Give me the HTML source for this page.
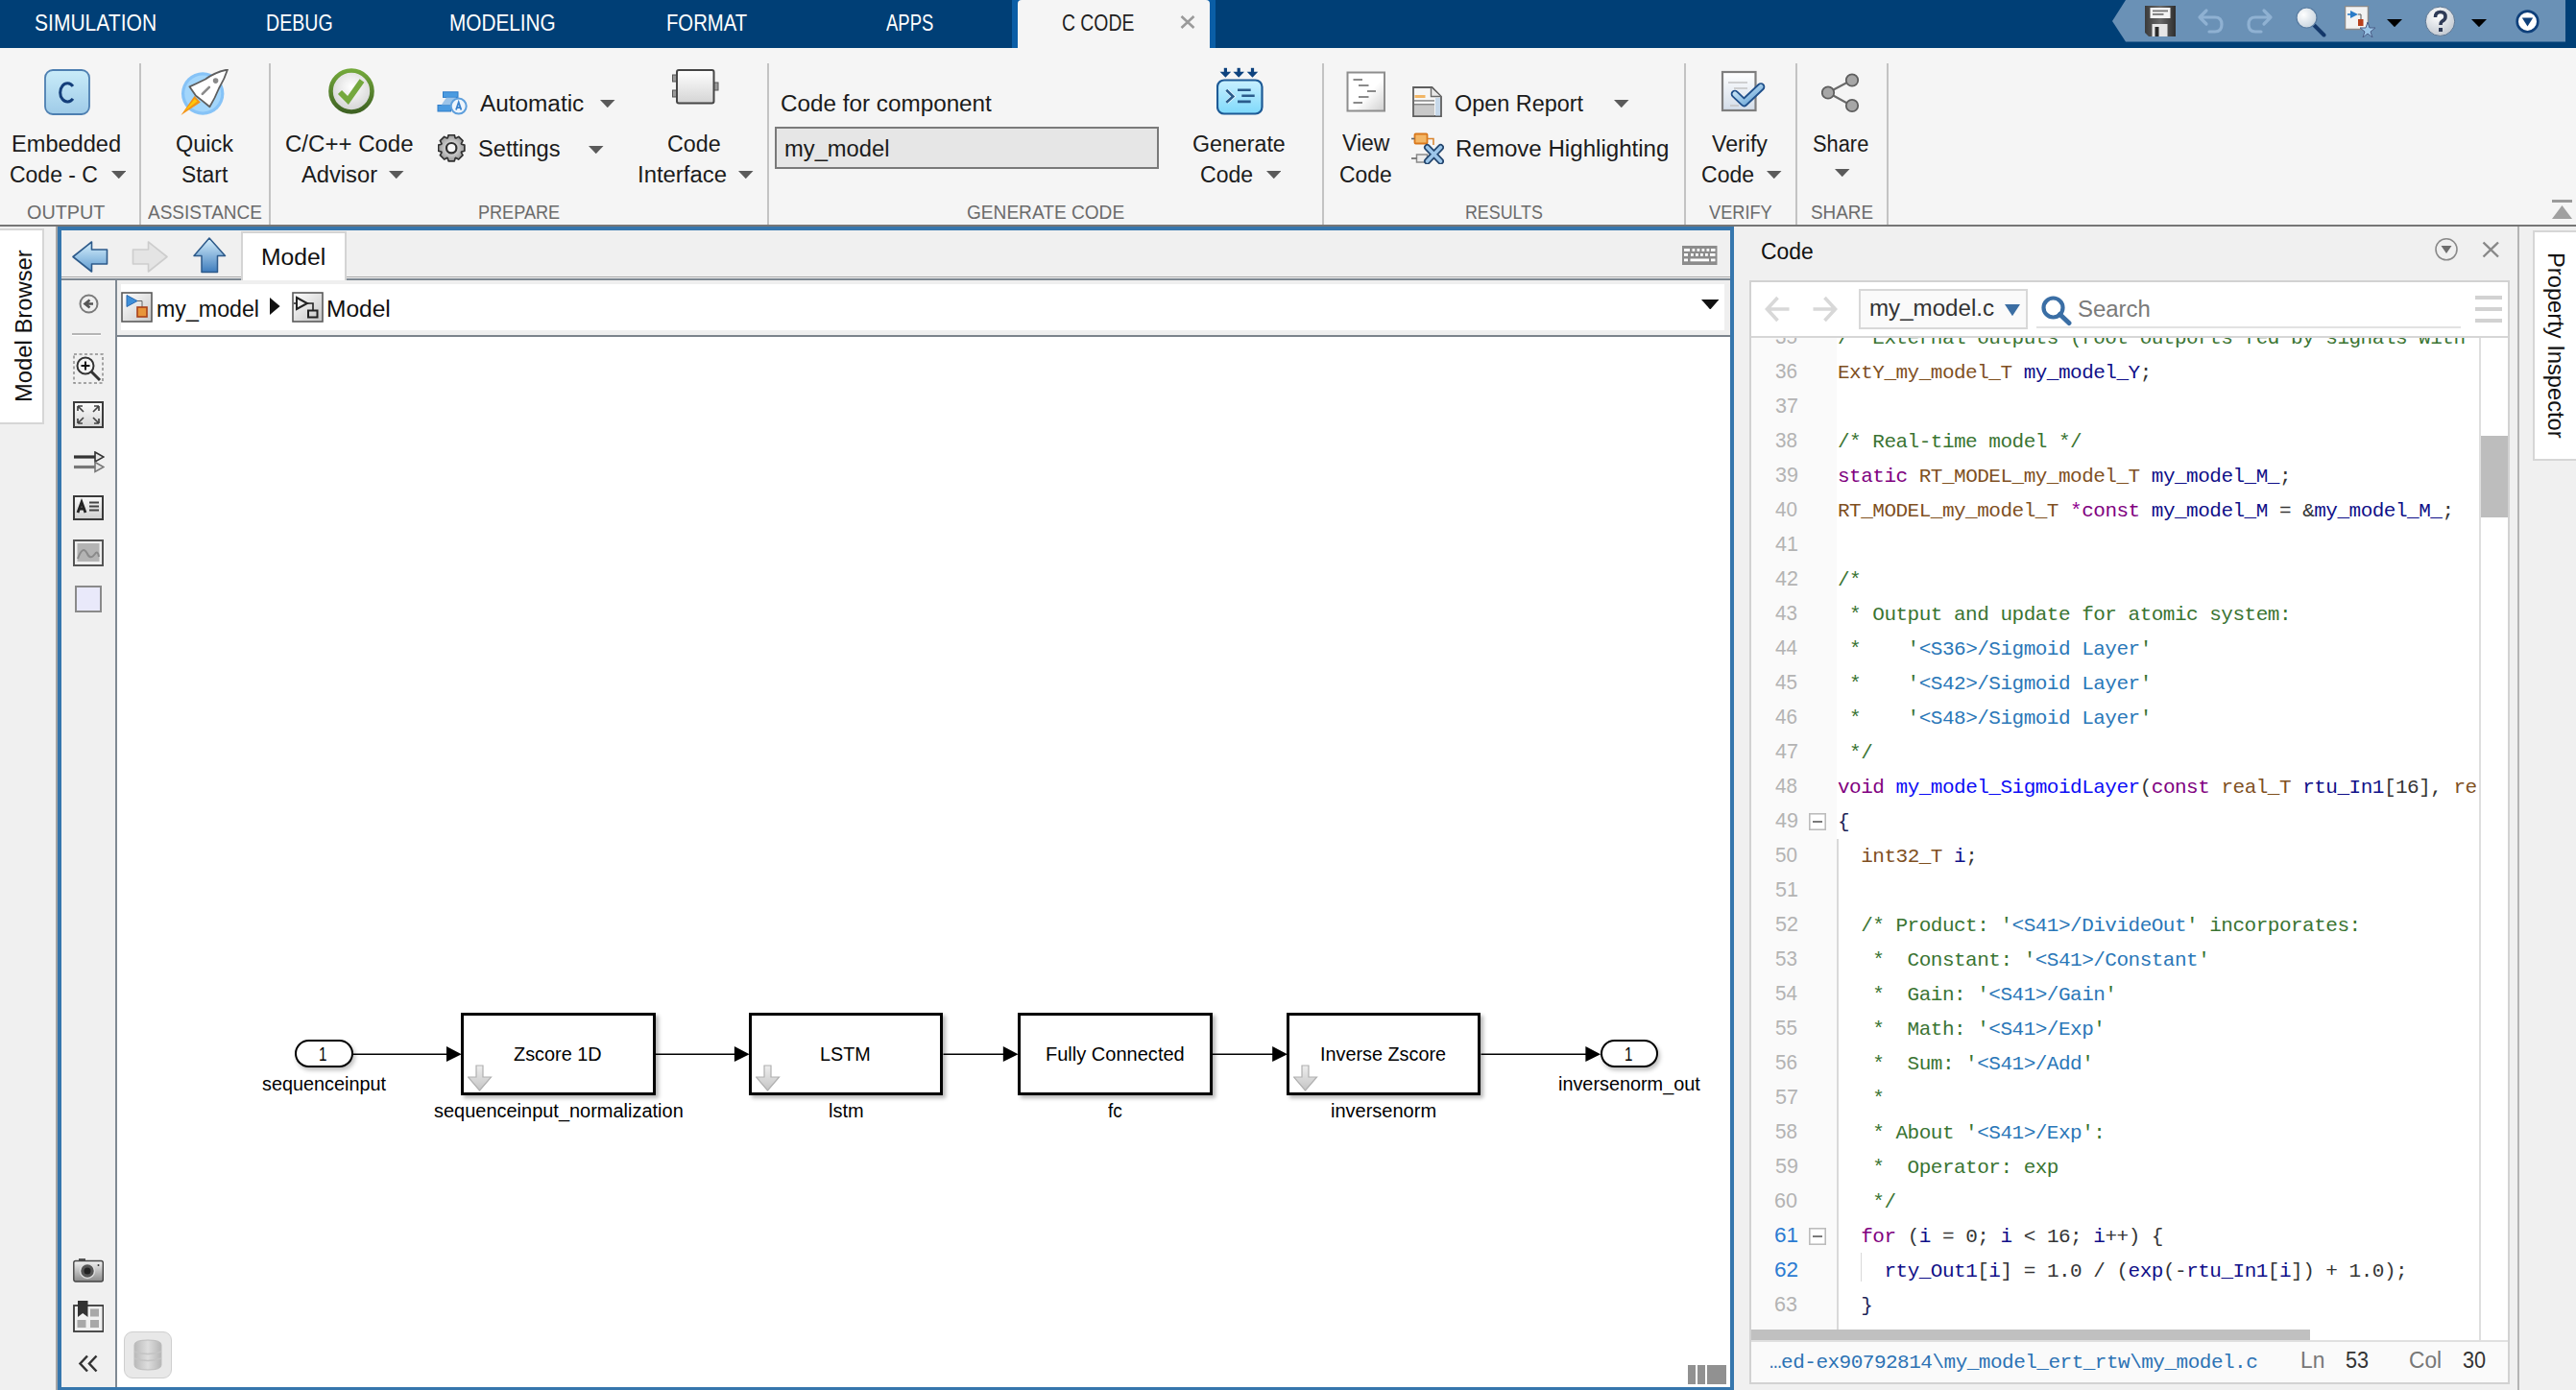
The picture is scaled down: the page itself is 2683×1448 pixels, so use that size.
<!DOCTYPE html>
<html><head><meta charset="utf-8"><title>Simulink C Code</title>
<style>
html,body{margin:0;padding:0;}
body{width:2683px;height:1448px;overflow:hidden;position:relative;background:#f0f0f0;font-family:"Liberation Sans",sans-serif;}
body>div,body>span,body>svg{position:absolute;display:block;}
.t{position:absolute;white-space:pre;line-height:0;transform-origin:0 0;}
</style></head><body>
<div style="left:0px;top:0px;width:2683px;height:50px;background:#003f76;"></div>
<span class="t" style="left:36.38px;top:23.85px;font-family:'Liberation Sans', sans-serif;font-size:23px;color:#ffffff;transform:scaleX(0.9152);">SIMULATION</span>
<span class="t" style="left:277.15px;top:23.85px;font-family:'Liberation Sans', sans-serif;font-size:23px;color:#ffffff;transform:scaleX(0.8510);">DEBUG</span>
<span class="t" style="left:468.10px;top:23.85px;font-family:'Liberation Sans', sans-serif;font-size:23px;color:#ffffff;transform:scaleX(0.9024);">MODELING</span>
<span class="t" style="left:693.82px;top:23.85px;font-family:'Liberation Sans', sans-serif;font-size:23px;color:#ffffff;transform:scaleX(0.8808);">FORMAT</span>
<span class="t" style="left:923.00px;top:23.85px;font-family:'Liberation Sans', sans-serif;font-size:23px;color:#ffffff;transform:scaleX(0.8030);">APPS</span>
<div style="left:1054px;top:0px;width:212px;height:50px;background:#0a5ea6;"></div>
<div style="left:1060px;top:0px;width:200px;height:52px;background:#f5f5f5;border-radius:4px 4px 0 0;"></div>
<span class="t" style="left:1105.96px;top:23.85px;font-family:'Liberation Sans', sans-serif;font-size:23px;color:#1e1e1e;transform:scaleX(0.8421);">C CODE</span>
<svg style="left:1228px;top:15px;" width="18" height="16" viewBox="0 0 18 16"><path d="M2.5 2 L15.5 14 M15.5 2 L2.5 14" stroke="#9a9a9a" stroke-width="2.6"/></svg>
<svg style="left:2198px;top:0px;" width="480" height="45" viewBox="0 0 480 45"><polygon points="2,22 16,0 474,0 474,43.5 16,43.5" fill="#6a91b6"/></svg>
<svg style="left:2234px;top:6px;" width="32" height="32" viewBox="0 0 32 32"><defs><linearGradient id="gsv" x1="0" y1="0" x2="1" y2="0"><stop offset="0" stop-color="#3a3a3a"/><stop offset="0.5" stop-color="#6a6a6a"/><stop offset="1" stop-color="#2e2e2e"/></linearGradient></defs><path d="M0,0 H32 V32 H4 L0,28 Z" fill="url(#gsv)"/><rect x="5.5" y="2" width="21" height="11" fill="#f4f4f4"/><rect x="8" y="4.5" width="16" height="1.8" fill="#777"/><rect x="8" y="8" width="11.5" height="1.8" fill="#777"/><rect x="7.5" y="19" width="16" height="13" fill="#e6e6e6"/><rect x="10.5" y="22" width="4" height="10" fill="#2a2a2a"/></svg>
<svg style="left:2287px;top:8px;" width="32" height="30" viewBox="0 0 32 30"><path d="M4,10 L11,3 M4,10 L11,17 M4,10 H20 Q27,10 27,17.5 Q27,25 20,25 H14" fill="none" stroke="#8fb1d2" stroke-width="3.2" stroke-linecap="round" stroke-linejoin="round"/></svg>
<svg style="left:2337px;top:8px;" width="32" height="30" viewBox="0 0 32 30"><g transform="translate(32,0) scale(-1,1)"><path d="M4,10 L11,3 M4,10 L11,17 M4,10 H20 Q27,10 27,17.5 Q27,25 20,25 H14" fill="none" stroke="#8fb1d2" stroke-width="3.2" stroke-linecap="round" stroke-linejoin="round"/></g></svg>
<svg style="left:2390px;top:6px;" width="33" height="33" viewBox="0 0 33 33"><defs><radialGradient id="gmg" cx="0.35" cy="0.35" r="0.7"><stop offset="0" stop-color="#ffffff"/><stop offset="1" stop-color="#c8d4de"/></radialGradient></defs><path d="M20,20 L30.5,30.5" stroke="#14386a" stroke-width="4" stroke-linecap="round"/><circle cx="12.5" cy="12.5" r="10.5" fill="url(#gmg)" stroke="#587ba0" stroke-width="1.2"/></svg>
<svg style="left:2442px;top:6px;" width="33" height="33" viewBox="0 0 33 33"><rect x="0.5" y="0.5" width="24" height="24" fill="#f2f2f2" stroke="#8a8a8a" stroke-width="1.5"/><polygon points="6,5 14,9 6,13" fill="#2a7bc8"/><rect x="3" y="8.2" width="4" height="1.6" fill="#2a7bc8"/><path d="M14,9 H17 V15" fill="none" stroke="#555" stroke-width="1"/><rect x="14" y="14" width="5.5" height="7" fill="#b8401c"/><polygon points="24,17 26,23 32,23 27,27 29,33 24,29 19,33 21,27 16,23 22,23" fill="#9cc6e8" stroke="#4b5e88" stroke-width="1"/></svg>
<svg style="left:2486px;top:20px;" width="16" height="8.2" viewBox="0 0 16 8.2"><polygon points="0,0 16,0 8,8.2" fill="#000"/></svg>
<svg style="left:2525px;top:5.5px;" width="34" height="34" viewBox="0 0 34 34"><defs><radialGradient id="ghp" cx="0.4" cy="0.3" r="0.75"><stop offset="0" stop-color="#ffffff"/><stop offset="1" stop-color="#bfc6cf"/></radialGradient></defs><circle cx="16.5" cy="16.2" r="15.2" fill="url(#ghp)" stroke="#5b7592" stroke-width="1"/><path d="M11.5,12 Q11.5,6.5 16.8,6.5 Q22,6.5 22,11.5 Q22,14.5 18.8,16 Q17,17 17,20" fill="none" stroke="#2f3b57" stroke-width="3.6"/><rect x="15" y="23" width="4" height="4" fill="#2f3b57"/></svg>
<svg style="left:2574px;top:20px;" width="16" height="8.2" viewBox="0 0 16 8.2"><polygon points="0,0 16,0 8,8.2" fill="#000"/></svg>
<svg style="left:2619.5px;top:9.5px;" width="25" height="25" viewBox="0 0 25 25"><circle cx="12.5" cy="12.4" r="10.8" fill="#fff" stroke="#0e3f7a" stroke-width="2.6"/><polygon points="6.8,8.5 18.2,8.5 12.5,17.5" fill="#0e3f7a"/></svg>
<div style="left:0px;top:50px;width:2683px;height:184px;background:#f5f5f5;"></div>
<div style="left:0px;top:234px;width:2683px;height:2px;background:#767676;"></div>
<div style="left:145px;top:66px;width:2px;height:168px;background:#c3c3c3;"></div>
<div style="left:280px;top:66px;width:2px;height:168px;background:#c3c3c3;"></div>
<div style="left:799px;top:66px;width:2px;height:168px;background:#c3c3c3;"></div>
<div style="left:1377px;top:66px;width:2px;height:168px;background:#c3c3c3;"></div>
<div style="left:1754px;top:66px;width:2px;height:168px;background:#c3c3c3;"></div>
<div style="left:1870px;top:66px;width:2px;height:168px;background:#c3c3c3;"></div>
<div style="left:1965px;top:66px;width:2px;height:168px;background:#c3c3c3;"></div>
<span class="t" style="left:11.60px;top:149.78px;font-family:'Liberation Sans', sans-serif;font-size:23.5px;color:#1b1b1b;transform:scaleX(1.0036);">Embedded</span>
<span class="t" style="left:10.02px;top:181.78px;font-family:'Liberation Sans', sans-serif;font-size:23.5px;color:#1b1b1b;transform:scaleX(0.9778);">Code - C</span>
<svg style="left:115.5px;top:177.8px;" width="15.5" height="8.2" viewBox="0 0 15.5 8.2"><polygon points="0,0 15.5,0 7.75,8.2" fill="#5a5a5a"/></svg>
<span class="t" style="left:182.80px;top:149.78px;font-family:'Liberation Sans', sans-serif;font-size:23.5px;color:#1b1b1b;transform:scaleX(0.9980);">Quick</span>
<span class="t" style="left:189.03px;top:181.78px;font-family:'Liberation Sans', sans-serif;font-size:23.5px;color:#1b1b1b;transform:scaleX(0.9736);">Start</span>
<span class="t" style="left:297.48px;top:149.78px;font-family:'Liberation Sans', sans-serif;font-size:23.5px;color:#1b1b1b;transform:scaleX(1.0227);">C/C++ Code</span>
<span class="t" style="left:313.50px;top:181.78px;font-family:'Liberation Sans', sans-serif;font-size:23.5px;color:#1b1b1b;transform:scaleX(1.0085);">Advisor</span>
<svg style="left:405px;top:177.8px;" width="15.5" height="8.2" viewBox="0 0 15.5 8.2"><polygon points="0,0 15.5,0 7.75,8.2" fill="#5a5a5a"/></svg>
<span class="t" style="left:500.00px;top:108.08px;font-family:'Liberation Sans', sans-serif;font-size:23.5px;color:#1b1b1b;transform:scaleX(1.0359);">Automatic</span>
<svg style="left:625px;top:104px;" width="15.5" height="8.2" viewBox="0 0 15.5 8.2"><polygon points="0,0 15.5,0 7.75,8.2" fill="#5a5a5a"/></svg>
<span class="t" style="left:497.69px;top:155.18px;font-family:'Liberation Sans', sans-serif;font-size:23.5px;color:#1b1b1b;transform:scaleX(1.0077);">Settings</span>
<svg style="left:613px;top:151.8px;" width="15.5" height="8.2" viewBox="0 0 15.5 8.2"><polygon points="0,0 15.5,0 7.75,8.2" fill="#5a5a5a"/></svg>
<span class="t" style="left:695.01px;top:149.78px;font-family:'Liberation Sans', sans-serif;font-size:23.5px;color:#1b1b1b;transform:scaleX(0.9907);">Code</span>
<span class="t" style="left:663.97px;top:181.78px;font-family:'Liberation Sans', sans-serif;font-size:23.5px;color:#1b1b1b;transform:scaleX(1.0160);">Interface</span>
<svg style="left:769px;top:177.8px;" width="15.5" height="8.2" viewBox="0 0 15.5 8.2"><polygon points="0,0 15.5,0 7.75,8.2" fill="#5a5a5a"/></svg>
<span class="t" style="left:813.37px;top:108.08px;font-family:'Liberation Sans', sans-serif;font-size:23.5px;color:#1b1b1b;transform:scaleX(1.0325);">Code for component</span>
<div style="left:807px;top:132.3px;width:400px;height:43.4px;background:#e6e6e6;box-sizing:border-box;border:2px solid #7a7a7a;"></div>
<span class="t" style="left:817.49px;top:155.18px;font-family:'Liberation Sans', sans-serif;font-size:23.5px;color:#1b1b1b;transform:scaleX(1.0096);">my_model</span>
<span class="t" style="left:1241.61px;top:149.78px;font-family:'Liberation Sans', sans-serif;font-size:23.5px;color:#1b1b1b;transform:scaleX(0.9875);">Generate</span>
<span class="t" style="left:1249.82px;top:181.78px;font-family:'Liberation Sans', sans-serif;font-size:23.5px;color:#1b1b1b;transform:scaleX(0.9799);">Code</span>
<svg style="left:1318.5px;top:177.8px;" width="15.5" height="8.2" viewBox="0 0 15.5 8.2"><polygon points="0,0 15.5,0 7.75,8.2" fill="#5a5a5a"/></svg>
<span class="t" style="left:1398.00px;top:149.28px;font-family:'Liberation Sans', sans-serif;font-size:23.5px;color:#1b1b1b;transform:scaleX(0.9779);">View</span>
<span class="t" style="left:1395.43px;top:181.78px;font-family:'Liberation Sans', sans-serif;font-size:23.5px;color:#1b1b1b;transform:scaleX(0.9726);">Code</span>
<span class="t" style="left:1515.00px;top:108.08px;font-family:'Liberation Sans', sans-serif;font-size:23.5px;color:#1b1b1b;transform:scaleX(0.9961);">Open Report</span>
<svg style="left:1681px;top:104px;" width="15.5" height="8.2" viewBox="0 0 15.5 8.2"><polygon points="0,0 15.5,0 7.75,8.2" fill="#5a5a5a"/></svg>
<span class="t" style="left:1515.67px;top:155.38px;font-family:'Liberation Sans', sans-serif;font-size:23.5px;color:#1b1b1b;transform:scaleX(1.0258);">Remove Highlighting</span>
<span class="t" style="left:1782.80px;top:149.78px;font-family:'Liberation Sans', sans-serif;font-size:23.5px;color:#1b1b1b;transform:scaleX(0.9861);">Verify</span>
<span class="t" style="left:1772.02px;top:181.78px;font-family:'Liberation Sans', sans-serif;font-size:23.5px;color:#1b1b1b;transform:scaleX(0.9799);">Code</span>
<svg style="left:1840px;top:177.8px;" width="15.5" height="8.2" viewBox="0 0 15.5 8.2"><polygon points="0,0 15.5,0 7.75,8.2" fill="#5a5a5a"/></svg>
<span class="t" style="left:1887.77px;top:149.78px;font-family:'Liberation Sans', sans-serif;font-size:23.5px;color:#1b1b1b;transform:scaleX(0.9296);">Share</span>
<svg style="left:1911px;top:175.8px;" width="15.5" height="8.2" viewBox="0 0 15.5 8.2"><polygon points="0,0 15.5,0 7.75,8.2" fill="#5a5a5a"/></svg>
<span class="t" style="left:28.46px;top:221.05px;font-family:'Liberation Sans', sans-serif;font-size:21px;color:#6b6b6b;transform:scaleX(0.9427);">OUTPUT</span>
<span class="t" style="left:153.70px;top:221.05px;font-family:'Liberation Sans', sans-serif;font-size:21px;color:#6b6b6b;transform:scaleX(0.9044);">ASSISTANCE</span>
<span class="t" style="left:497.84px;top:221.05px;font-family:'Liberation Sans', sans-serif;font-size:21px;color:#6b6b6b;transform:scaleX(0.8609);">PREPARE</span>
<span class="t" style="left:1006.79px;top:221.05px;font-family:'Liberation Sans', sans-serif;font-size:21px;color:#6b6b6b;transform:scaleX(0.9094);">GENERATE CODE</span>
<span class="t" style="left:1525.95px;top:221.05px;font-family:'Liberation Sans', sans-serif;font-size:21px;color:#6b6b6b;transform:scaleX(0.8484);">RESULTS</span>
<span class="t" style="left:1780.00px;top:221.05px;font-family:'Liberation Sans', sans-serif;font-size:21px;color:#6b6b6b;transform:scaleX(0.8663);">VERIFY</span>
<span class="t" style="left:1886.00px;top:221.05px;font-family:'Liberation Sans', sans-serif;font-size:21px;color:#6b6b6b;transform:scaleX(0.8985);">SHARE</span>
<div style="left:2658px;top:208px;width:21px;height:3px;background:#9a9a9a;"></div>
<svg style="left:2658px;top:214px;" width="21" height="14" viewBox="0 0 21 14"><polygon points="0,14 10.5,0 21,14" fill="#a0a0a0"/></svg>
<svg style="left:46px;top:72px;" width="48" height="48" viewBox="0 0 48 48"><defs><linearGradient id="gc" x1="0" y1="0" x2="0" y2="1"><stop offset="0" stop-color="#c9ecf9"/><stop offset="1" stop-color="#9fcbe8"/></linearGradient></defs><rect x="1" y="1" width="46" height="46" rx="8" fill="url(#gc)" stroke="#4d7fb1" stroke-width="1.8"/><path d="M29.95,17.98 A7.6,9.6 0 1 0 29.95,30.82" fill="none" stroke="#143e7a" stroke-width="3"/></svg>
<svg style="left:188px;top:72px;" width="50" height="50" viewBox="0 0 50 50"><circle cx="23.2" cy="25.5" r="22.2" fill="#86c3f7"/><circle cx="23.2" cy="25.5" r="19" fill="#a3d6fb"/><polygon points="0.5,48 14.5,28 20.8,34.4" fill="#f39418"/><polygon points="4,44 14.8,31 17.5,33.6" fill="#ffc90a"/><path d="M49,0.5 Q36,3 26,10.5 Q17,15 9.4,18.3 L16,27.7 L22.3,32.6 L30.4,39.3 Q36,30 40,20 Q46,10 49,0.5 Z" fill="#ffffff" stroke="#5e5e5e" stroke-width="1.8" stroke-linejoin="round"/><circle cx="36.6" cy="12.1" r="2.8" fill="#8a8a8a"/><path d="M22.8,25.9 L29.9,18.8" stroke="#8a8a8a" stroke-width="2.6" stroke-linecap="round"/></svg>
<svg style="left:342px;top:71px;" width="48" height="48" viewBox="0 0 48 48"><defs><radialGradient id="gck" cx="0.5" cy="0.4" r="0.6"><stop offset="0" stop-color="#ffffff"/><stop offset="1" stop-color="#d2d2d2"/></radialGradient><linearGradient id="gckr" x1="0" y1="0" x2="0" y2="1"><stop offset="0" stop-color="#73a83a"/><stop offset="1" stop-color="#3f6223"/></linearGradient></defs><circle cx="24" cy="24" r="21.5" fill="url(#gck)" stroke="url(#gckr)" stroke-width="4.6"/><path d="M12,25 L20.5,33.5 L35,13" fill="none" stroke="#74a83e" stroke-width="5.8"/></svg>
<svg style="left:455px;top:95px;" width="32" height="26" viewBox="0 0 32 26"><g fill="#4b9be0" stroke="#2f7cc8" stroke-width="1"><rect x="6.5" y="0.8" width="15.5" height="5.6"/><rect x="1" y="14.5" width="13.5" height="6.5"/></g><polygon points="10,6.4 20,6.4 14.5,14.5 4.5,14.5" fill="#8cbbe6" opacity="0.85"/><circle cx="22.7" cy="15.6" r="8" fill="#eef5fc" stroke="#5e9fdc" stroke-width="2"/><path d="M20,19.5 L22.7,11.5 L25.4,19.5 M20.8,17.2 H24.6" fill="none" stroke="#3b82cc" stroke-width="1.8"/></svg>
<svg style="left:455.8px;top:139.5px;" width="29" height="29" viewBox="0 0 29 29"><defs><radialGradient id="ggr" cx="0.5" cy="0.5" r="0.5"><stop offset="0.3" stop-color="#dcdcdc"/><stop offset="1" stop-color="#9a9a9a"/></radialGradient></defs><polygon points="24.68,10.25 27.86,11.14 27.86,17.26 24.68,18.15 24.40,18.82 26.02,21.70 21.70,26.02 18.82,24.40 18.15,24.68 17.26,27.86 11.14,27.86 10.25,24.68 9.58,24.40 6.70,26.02 2.38,21.70 4.00,18.82 3.72,18.15 0.54,17.26 0.54,11.14 3.72,10.25 4.00,9.58 2.38,6.70 6.70,2.38 9.58,4.00 10.25,3.72 11.14,0.54 17.26,0.54 18.15,3.72 18.82,4.00 21.70,2.38 26.02,6.70 24.40,9.58" fill="url(#ggr)" stroke="#303030" stroke-width="1.7" stroke-linejoin="round"/><circle cx="14.2" cy="14.2" r="5.2" fill="#f7f7f7" stroke="#2e2e2e" stroke-width="2.2"/></svg>
<svg style="left:700px;top:72px;" width="49" height="37" viewBox="0 0 49 37"><defs><linearGradient id="gci" x1="0" y1="0" x2="0" y2="1"><stop offset="0" stop-color="#ffffff"/><stop offset="1" stop-color="#d4d4d4"/></linearGradient></defs><rect x="0.5" y="6" width="5" height="7" fill="#9a9a9a" stroke="#555" stroke-width="1"/><rect x="0.5" y="22" width="5" height="7" fill="#9a9a9a" stroke="#555" stroke-width="1"/><rect x="43" y="14" width="5" height="8" fill="#9a9a9a" stroke="#555" stroke-width="1"/><rect x="5" y="1" width="38.5" height="34.5" rx="2" fill="url(#gci)" stroke="#454545" stroke-width="2"/></svg>
<svg style="left:1267px;top:70px;" width="49" height="50" viewBox="0 0 49 50"><defs><linearGradient id="ggc" x1="0" y1="0" x2="0" y2="1"><stop offset="0" stop-color="#c9f0ff"/><stop offset="1" stop-color="#7fd9fb"/></linearGradient></defs><g fill="#0d427e"><rect x="7.800000000000001" y="0.8" width="3.2" height="5"/><polygon points="3.6000000000000005,4.8 15.2,4.8 9.4,10.8"/><rect x="21.599999999999998" y="0.8" width="3.2" height="5"/><polygon points="17.4,4.8 29.0,4.8 23.2,10.8"/><rect x="35.9" y="0.8" width="3.2" height="5"/><polygon points="31.7,4.8 43.3,4.8 37.5,10.8"/></g><rect x="1" y="13.5" width="46.5" height="35" rx="7" fill="url(#ggc)" stroke="#1d5a96" stroke-width="2.2"/><path d="M10.5,23.8 L17.5,30.5 L10.5,36.8" fill="none" stroke="#ffffff" stroke-width="4" opacity="0.7"/><path d="M10.3,23.8 L17.3,30.5 L10.3,36.8" fill="none" stroke="#2b5b8b" stroke-width="2.6"/><path d="M22,23.8 H35.7 M26.3,29.8 H39.7 M22,35.9 H35.7" stroke="#2b5b8b" stroke-width="2.6"/></svg>
<svg style="left:1402px;top:73.5px;" width="42" height="43" viewBox="0 0 42 43"><defs><linearGradient id="gvc" x1="0" y1="0" x2="1" y2="1"><stop offset="0.55" stop-color="#ffffff"/><stop offset="1" stop-color="#cfcfcf"/></linearGradient></defs><rect x="1.5" y="1.5" width="38.5" height="40" fill="url(#gvc)" stroke="#8e8e8e" stroke-width="2"/><path d="M7.5,9 H17 M13,15 H23.5 M22,21 H31 M13,27 H23.5 M7.5,33 H17" stroke="#8a8a8a" stroke-width="2"/></svg>
<svg style="left:1471px;top:90px;" width="31" height="32" viewBox="0 0 31 32"><path d="M1,1 H20.5 L30,10.5 V31 H1 Z" fill="#f6f6f6" stroke="#5e5e5e" stroke-width="1.8"/><path d="M19.5,1.5 V10.5 H29.5" fill="#e8e8e8" stroke="#6a6a6a" stroke-width="1.4"/><rect x="2" y="19.5" width="21" height="10.8" fill="#c9c9c9"/><rect x="2" y="14" width="21" height="1.8" fill="#9a9a9a"/><rect x="2" y="18" width="21" height="1.6" fill="#8a8a8a"/><rect x="24" y="12" width="5" height="18.5" fill="#c6d8ea"/><rect x="2.5" y="9" width="11" height="3" fill="#f2b666"/></svg>
<svg style="left:1470px;top:138px;" width="34" height="33" viewBox="0 0 34 33"><rect x="3.5" y="1.5" width="13" height="10" rx="1" fill="#f4b766" stroke="#d9781c" stroke-width="1.8"/><path d="M16.5,6.5 H23 V13" fill="none" stroke="#d9822a" stroke-width="1.5"/><path d="M0,6.5 H3.5" stroke="#666" stroke-width="1.6"/><rect x="5.5" y="23" width="11" height="8" fill="#ececec" stroke="#8a8a8a" stroke-width="1.5"/><path d="M0,27 H5.5" stroke="#666" stroke-width="1.6"/><path d="M16.5,15.5 L30.5,30 M30.5,15.5 L16.5,30" stroke="#24466e" stroke-width="7" stroke-linecap="round"/><path d="M16.5,15.5 L30.5,30 M30.5,15.5 L16.5,30" stroke="#9cc6ea" stroke-width="3.6" stroke-linecap="round"/></svg>
<svg style="left:1792px;top:73px;" width="47" height="44" viewBox="0 0 47 44"><defs><linearGradient id="gvf" x1="0" y1="0" x2="0" y2="1"><stop offset="0" stop-color="#ffffff"/><stop offset="1" stop-color="#d3dde9"/></linearGradient><linearGradient id="gvk" x1="0" y1="0" x2="1" y2="1"><stop offset="0" stop-color="#d9f0fb"/><stop offset="1" stop-color="#5b9bd3"/></linearGradient></defs><rect x="2" y="2" width="34.5" height="40" fill="url(#gvf)" stroke="#7e7e7e" stroke-width="2.2"/><path d="M8,13 H28 M14,19 H28 M10,37 H19" stroke="#c4c4c4" stroke-width="1.4"/><path d="M15,25 L24.5,34 L42,17.5" fill="none" stroke="#1f4f8a" stroke-width="8.6" stroke-linejoin="round" stroke-linecap="round"/><path d="M15,25 L24.5,34 L42,17.5" fill="none" stroke="url(#gvk)" stroke-width="5" stroke-linejoin="round" stroke-linecap="round"/></svg>
<svg style="left:1897px;top:75.5px;" width="40" height="42" viewBox="0 0 40 42"><path d="M7,20.5 L30.5,8 M7,20.5 L30.5,33.5" stroke="#6a6a6a" stroke-width="2"/><g fill="#a6a6a6" stroke="#5e5e5e" stroke-width="1.8"><circle cx="7" cy="20.5" r="6.2"/><circle cx="32" cy="7.5" r="6.2"/><circle cx="32" cy="34" r="6.2"/></g></svg>
<div style="left:0px;top:236px;width:58px;height:1212px;background:#f0f0f0;"></div>
<div style="left:0px;top:238px;width:46px;height:203.5px;background:#ffffff;box-sizing:border-box;border:2px solid #d6d6d6;border-left:none;"></div>
<span class="t" style="left:24.77px;top:418.71px;font-family:'Liberation Sans', sans-serif;font-size:23.5px;color:#111;transform:rotate(-90deg) scaleX(1.0129);">Model Browser</span>
<div style="left:58px;top:236px;width:2px;height:1212px;background:#a6a6a6;"></div>
<div style="left:60px;top:236px;width:1746px;height:4px;background:#3676ad;"></div>
<div style="left:60px;top:236px;width:4px;height:1212px;background:#3676ad;"></div>
<div style="left:1802px;top:236px;width:4px;height:1212px;background:#3676ad;"></div>
<div style="left:60px;top:1445px;width:1746px;height:3px;background:#3676ad;"></div>
<div style="left:64px;top:240px;width:1738px;height:51px;background:#f0f0f0;"></div>
<div style="left:64px;top:288px;width:1738px;height:1px;background:#a9a9a9;"></div>
<div style="left:64px;top:290px;width:1738px;height:2px;background:#7f8993;"></div>
<div style="left:250.5px;top:240.5px;width:110.5px;height:51px;background:#ffffff;box-sizing:border-box;border:2px solid #d4d4d4;border-bottom:none;"></div>
<span class="t" style="left:272.35px;top:267.97px;font-family:'Liberation Sans', sans-serif;font-size:23.5px;color:#111;transform:scaleX(1.0504);">Model</span>
<div style="left:64px;top:292px;width:56px;height:1153px;background:#f0f0f0;"></div>
<div style="left:120px;top:292px;width:1.5px;height:1153px;background:#7f8993;"></div>
<div style="left:122px;top:292px;width:1680px;height:57px;background:#efefef;"></div>
<div style="left:126px;top:296px;width:1670px;height:48px;background:#ffffff;"></div>
<div style="left:122px;top:349px;width:1680px;height:2px;background:#7b838b;"></div>
<span class="t" style="left:162.51px;top:321.67px;font-family:'Liberation Sans', sans-serif;font-size:23.5px;color:#111;transform:scaleX(0.9870);">my_model</span>
<svg style="left:281.4px;top:310px;" width="11" height="18" viewBox="0 0 11 18"><polygon points="0,0 10.6,9 0,18" fill="#111"/></svg>
<span class="t" style="left:340.46px;top:321.77px;font-family:'Liberation Sans', sans-serif;font-size:23.5px;color:#111;transform:scaleX(1.0440);">Model</span>
<svg style="left:1771.8px;top:311.8px;" width="18.5" height="10.5" viewBox="0 0 18.5 10.5"><polygon points="0,0 18.5,0 9.25,10.5" fill="#111"/></svg>
<div style="left:122px;top:351px;width:1680px;height:1094px;background:#ffffff;"></div>
<svg style="left:75px;top:250.5px;" width="38" height="33" viewBox="0 0 38 33"><defs><linearGradient id="gba" x1="0" y1="0" x2="0" y2="1"><stop offset="0" stop-color="#d8f1fd"/><stop offset="1" stop-color="#5f9bd0"/></linearGradient></defs><polygon points="1,16.5 20.5,1 20.5,9 36.5,9 36.5,24 20.5,24 20.5,32" fill="url(#gba)" stroke="#2d5a8a" stroke-width="1.6" stroke-linejoin="round"/></svg>
<svg style="left:137px;top:250.5px;" width="38" height="33" viewBox="0 0 38 33"><polygon points="37,16.5 17.5,1 17.5,9 1.5,9 1.5,24 17.5,24 17.5,32" fill="#e4e4e4" stroke="#cdcdcd" stroke-width="1.6" stroke-linejoin="round"/></svg>
<svg style="left:200.5px;top:247px;" width="35" height="38" viewBox="0 0 35 38"><defs><linearGradient id="gup" x1="0" y1="0" x2="0" y2="1"><stop offset="0" stop-color="#d8f1fd"/><stop offset="1" stop-color="#3f7dbd"/></linearGradient></defs><polygon points="17,1 33.5,19.5 25.5,19.5 25.5,36.5 9,36.5 9,19.5 1,19.5" fill="url(#gup)" stroke="#2d5a8a" stroke-width="1.5" stroke-linejoin="round"/></svg>
<svg style="left:1752px;top:256px;" width="37" height="20" viewBox="0 0 37 20"><rect x="0" y="0" width="36.5" height="20" fill="#8c8c8c"/><rect x="2" y="3" width="6" height="2.8" fill="#fff"/><rect x="10.5" y="3" width="2.8" height="2.8" fill="#fff"/><rect x="15.5" y="3" width="2.8" height="2.8" fill="#fff"/><rect x="20.5" y="3" width="2.8" height="2.8" fill="#fff"/><rect x="25.5" y="3" width="2.8" height="2.8" fill="#fff"/><rect x="30" y="3" width="4.5" height="2.8" fill="#fff"/><rect x="2" y="8" width="4" height="2.8" fill="#fff"/><rect x="9" y="8" width="2.8" height="2.8" fill="#fff"/><rect x="14" y="8" width="2.8" height="2.8" fill="#fff"/><rect x="19" y="8" width="2.8" height="2.8" fill="#fff"/><rect x="24" y="8" width="2.8" height="2.8" fill="#fff"/><rect x="29" y="8" width="5.5" height="2.8" fill="#fff"/><rect x="2" y="13.5" width="4" height="2.8" fill="#fff"/><rect x="8.5" y="13.5" width="19.5" height="2.8" fill="#fff"/><rect x="30" y="13.5" width="4.5" height="2.8" fill="#fff"/></svg>
<svg style="left:81.5px;top:305.5px;" width="21" height="21" viewBox="0 0 21 21"><circle cx="10.5" cy="10.5" r="9" fill="#efefef" stroke="#7a7a7a" stroke-width="2"/><path d="M15,10.5 H8 M11.5,6.5 L6.5,10.5 L11.5,14.5" fill="none" stroke="#555" stroke-width="2.6"/></svg>
<div style="left:75px;top:347px;width:30px;height:2px;background:#b5b5b5;"></div>
<div style="left:75px;top:349px;width:30px;height:1px;background:#ffffff;"></div>
<svg style="left:76px;top:368px;" width="32" height="32" viewBox="0 0 32 32"><rect x="1" y="1" width="30" height="30" fill="none" stroke="#8a8a8a" stroke-width="1.5" stroke-dasharray="3,2.5"/><circle cx="13" cy="13" r="8.5" fill="#f5f5f5" stroke="#333" stroke-width="2"/><path d="M13,8.5 V17.5 M8.5,13 H17.5" stroke="#111" stroke-width="2"/><path d="M19,19 L28,28" stroke="#333" stroke-width="3"/></svg>
<svg style="left:76px;top:418px;" width="32" height="28" viewBox="0 0 32 28"><defs><linearGradient id="gfit" x1="0" y1="0" x2="0" y2="1"><stop offset="0" stop-color="#fdfdfd"/><stop offset="1" stop-color="#d5d5d5"/></linearGradient></defs><rect x="1" y="1" width="30" height="26" fill="url(#gfit)" stroke="#3c3c3c" stroke-width="2"/><path d="M5,5 L11,11 M5,5 V10 M5,5 H10 M27,5 L21,11 M27,5 V10 M27,5 H22 M5,23 L11,17 M5,23 V18 M5,23 H10 M27,23 L21,17 M27,23 V18 M27,23 H22" stroke="#444" stroke-width="1.7" fill="none"/></svg>
<svg style="left:75.5px;top:469.5px;" width="33" height="23" viewBox="0 0 33 23"><path d="M1,6 H26" stroke="#333" stroke-width="3.2"/><path d="M1,16.5 H26" stroke="#777" stroke-width="3.2"/><polygon points="23,1 32,6 23,11" fill="#e8e8e8" stroke="#333" stroke-width="1.6"/><polygon points="23,11.5 32,16.5 23,21.5" fill="#e8e8e8" stroke="#777" stroke-width="1.6"/></svg>
<svg style="left:76px;top:516px;" width="32" height="26" viewBox="0 0 32 26"><defs><linearGradient id="gan" x1="0" y1="0" x2="0" y2="1"><stop offset="0" stop-color="#fafafa"/><stop offset="1" stop-color="#d0d0d0"/></linearGradient></defs><rect x="1" y="1" width="30" height="24" fill="url(#gan)" stroke="#3a3a3a" stroke-width="2"/><path d="M5,18 L9,7 L13,18 M6.5,14 H11.5" fill="none" stroke="#222" stroke-width="2.8"/><path d="M17,7.5 H27 M17,11.5 H27 M17,15.5 H27" stroke="#444" stroke-width="1.8"/></svg>
<svg style="left:76px;top:562px;" width="32" height="28" viewBox="0 0 32 28"><rect x="1" y="1" width="30" height="26" fill="#efefef" stroke="#555" stroke-width="2"/><rect x="4.5" y="4" width="23" height="19" fill="#b4b4b4"/><path d="M5,20 Q10,6 14.5,14 Q18,22 23,15 Q26,11 27,18" fill="none" stroke="#8a8a8a" stroke-width="2"/></svg>
<div style="left:78px;top:610px;width:28px;height:28px;background:#e9e9fa;box-sizing:border-box;border:2px solid #8a8a8a;"></div>
<svg style="left:76px;top:1311px;" width="32" height="25" viewBox="0 0 32 25"><defs><linearGradient id="gcam" x1="0" y1="0" x2="0" y2="1"><stop offset="0" stop-color="#f4f4f4"/><stop offset="1" stop-color="#8a8a8a"/></linearGradient></defs><rect x="6" y="0" width="7" height="3" fill="#555"/><rect x="0.8" y="2.5" width="30.5" height="21.5" rx="2" fill="url(#gcam)" stroke="#444" stroke-width="1.4"/><circle cx="15" cy="13" r="7.5" fill="#555" stroke="#ddd" stroke-width="1.5"/><circle cx="15" cy="13" r="3.5" fill="#222"/><circle cx="26.5" cy="7" r="1" fill="#333"/></svg>
<svg style="left:76px;top:1355px;" width="32" height="33" viewBox="0 0 32 33"><rect x="1" y="5" width="30.5" height="27" fill="#f0f0f0" stroke="#3a3a3a" stroke-width="1.8"/><rect x="18" y="8.5" width="9" height="8" fill="#a8a8a8"/><rect x="4.5" y="20" width="9" height="8" fill="#a8a8a8"/><rect x="18" y="20" width="9" height="8" fill="#a8a8a8"/><path d="M5,0 H15.5 V17 L10.2,13 L5,17 Z" fill="#333"/></svg>
<svg style="left:81px;top:1411px;" width="22" height="20" viewBox="0 0 22 20"><path d="M10,1.5 L2.5,9.5 L10,17.5 M19.5,1.5 L12,9.5 L19.5,17.5" fill="none" stroke="#333" stroke-width="2.5"/></svg>
<svg style="left:125.5px;top:304px;" width="33" height="32" viewBox="0 0 33 32"><defs><linearGradient id="gbm" x1="0" y1="0" x2="1" y2="1"><stop offset="0" stop-color="#ffffff"/><stop offset="1" stop-color="#c8c8c8"/></linearGradient></defs><rect x="1" y="1" width="31" height="30" fill="url(#gbm)" stroke="#5a5a5a" stroke-width="1.6"/><polygon points="6,3.5 17,9.5 6,15.5" fill="#3f8fd8" stroke="#2a6ab0" stroke-width="1"/><path d="M17,9.5 H22 V16" fill="none" stroke="#666" stroke-width="1"/><rect x="17" y="16" width="10" height="10" fill="#e8953a" stroke="#a8401a" stroke-width="1.6"/></svg>
<svg style="left:304px;top:304px;" width="33" height="32" viewBox="0 0 33 32"><defs><linearGradient id="gbs" x1="0" y1="0" x2="1" y2="1"><stop offset="0" stop-color="#ffffff"/><stop offset="1" stop-color="#c4c4c4"/></linearGradient></defs><rect x="1" y="1" width="31" height="30" fill="url(#gbs)" stroke="#5a5a5a" stroke-width="1.6"/><polygon points="5,6 16,12 5,18" fill="none" stroke="#222" stroke-width="2"/><path d="M2,12 H5 M16,12 H22 V19" fill="none" stroke="#222" stroke-width="1.6"/><rect x="17" y="19.5" width="9.5" height="7" fill="none" stroke="#222" stroke-width="2"/></svg>
<svg style="left:122px;top:1000px;" width="1680" height="200" viewBox="0 0 1680 200"><line x1="245.60000000000002" y1="98.29999999999995" x2="344" y2="98.29999999999995" stroke="#000" stroke-width="1.6"/><line x1="561" y1="98.29999999999995" x2="644.2" y2="98.29999999999995" stroke="#000" stroke-width="1.6"/><line x1="860.5" y1="98.29999999999995" x2="923.5999999999999" y2="98.29999999999995" stroke="#000" stroke-width="1.6"/><line x1="1140.7" y1="98.29999999999995" x2="1204" y2="98.29999999999995" stroke="#000" stroke-width="1.6"/><line x1="1420.5" y1="98.29999999999995" x2="1530.4" y2="98.29999999999995" stroke="#000" stroke-width="1.6"/><polygon points="343.0,90 358.7,98.29999999999995 343.0,106" fill="#000"/><polygon points="642.9,90 658.6,98.29999999999995 642.9,106" fill="#000"/><polygon points="922.8,90 938.5,98.29999999999995 922.8,106" fill="#000"/><polygon points="1203.2,90 1218.9,98.29999999999995 1203.2,106" fill="#000"/><polygon points="1529.3999999999999,90 1545.1,98.29999999999995 1529.3999999999999,106" fill="#000"/></svg>
<div style="left:480.2px;top:1054.6px;width:202.59999999999997px;height:86.4px;box-sizing:border-box;border:3px solid #000;background:#fff;box-shadow:3px 3px 4px rgba(0,0,0,0.28);"></div>
<span class="t" style="left:534.90px;top:1098.10px;font-family:'Liberation Sans', sans-serif;font-size:20px;color:#000;transform:scaleX(0.9934);">Zscore 1D</span>
<span class="t" style="left:451.60px;top:1156.80px;font-family:'Liberation Sans', sans-serif;font-size:20px;color:#000;transform:scaleX(0.9983);">sequenceinput_normalization</span>
<svg style="left:486.7px;top:1109px;" width="26" height="28" viewBox="0 0 26 28"><defs><linearGradient id="ga" x1="0" y1="0" x2="0" y2="1"><stop offset="0" stop-color="#eeeeee"/><stop offset="1" stop-color="#c4c4c4"/></linearGradient></defs><polygon points="9,1 16,1 16,13 24.5,13 12.5,27 0.5,13 9,13" fill="url(#ga)" stroke="#b0b0b0" stroke-width="1.2"/></svg>
<div style="left:780.1px;top:1054.6px;width:202.39999999999998px;height:86.4px;box-sizing:border-box;border:3px solid #000;background:#fff;box-shadow:3px 3px 4px rgba(0,0,0,0.28);"></div>
<span class="t" style="left:854.31px;top:1098.10px;font-family:'Liberation Sans', sans-serif;font-size:20px;color:#000;transform:scaleX(0.9868);">LSTM</span>
<span class="t" style="left:862.70px;top:1156.80px;font-family:'Liberation Sans', sans-serif;font-size:20px;color:#000;transform:scaleX(0.9971);">lstm</span>
<svg style="left:786.6px;top:1109px;" width="26" height="28" viewBox="0 0 26 28"><defs><linearGradient id="ga" x1="0" y1="0" x2="0" y2="1"><stop offset="0" stop-color="#eeeeee"/><stop offset="1" stop-color="#c4c4c4"/></linearGradient></defs><polygon points="9,1 16,1 16,13 24.5,13 12.5,27 0.5,13 9,13" fill="url(#ga)" stroke="#b0b0b0" stroke-width="1.2"/></svg>
<div style="left:1060px;top:1054.6px;width:202.70000000000005px;height:86.4px;box-sizing:border-box;border:3px solid #000;background:#fff;box-shadow:3px 3px 4px rgba(0,0,0,0.28);"></div>
<span class="t" style="left:1088.80px;top:1098.10px;font-family:'Liberation Sans', sans-serif;font-size:20px;color:#000;transform:scaleX(1.0014);">Fully Connected</span>
<span class="t" style="left:1154.00px;top:1156.80px;font-family:'Liberation Sans', sans-serif;font-size:20px;color:#000;transform:scaleX(0.9514);">fc</span>
<div style="left:1340.4px;top:1054.6px;width:202.0999999999999px;height:86.4px;box-sizing:border-box;border:3px solid #000;background:#fff;box-shadow:3px 3px 4px rgba(0,0,0,0.28);"></div>
<span class="t" style="left:1375.01px;top:1098.10px;font-family:'Liberation Sans', sans-serif;font-size:20px;color:#000;transform:scaleX(0.9905);">Inverse Zscore</span>
<span class="t" style="left:1385.80px;top:1156.80px;font-family:'Liberation Sans', sans-serif;font-size:20px;color:#000;transform:scaleX(1.0002);">inversenorm</span>
<svg style="left:1346.9px;top:1109px;" width="26" height="28" viewBox="0 0 26 28"><defs><linearGradient id="ga" x1="0" y1="0" x2="0" y2="1"><stop offset="0" stop-color="#eeeeee"/><stop offset="1" stop-color="#c4c4c4"/></linearGradient></defs><polygon points="9,1 16,1 16,13 24.5,13 12.5,27 0.5,13 9,13" fill="url(#ga)" stroke="#b0b0b0" stroke-width="1.2"/></svg>
<div style="left:306.8px;top:1083.3px;width:60.80000000000001px;height:29px;box-sizing:border-box;border:2px solid #000;border-radius:15px;background:#fff;box-shadow:2px 3px 4px rgba(0,0,0,0.25);"></div>
<span class="t" style="left:332.44px;top:1098.30px;font-family:'Liberation Sans', sans-serif;font-size:20px;color:#000;transform:scaleX(0.7600);">1</span>
<span class="t" style="left:272.60px;top:1129.20px;font-family:'Liberation Sans', sans-serif;font-size:20px;color:#000;transform:scaleX(0.9912);">sequenceinput</span>
<div style="left:1666.6px;top:1083.3px;width:60.700000000000045px;height:29px;box-sizing:border-box;border:2px solid #000;border-radius:15px;background:#fff;box-shadow:2px 3px 4px rgba(0,0,0,0.25);"></div>
<span class="t" style="left:1692.19px;top:1098.30px;font-family:'Liberation Sans', sans-serif;font-size:20px;color:#000;transform:scaleX(0.7600);">1</span>
<span class="t" style="left:1622.81px;top:1128.50px;font-family:'Liberation Sans', sans-serif;font-size:20px;color:#000;transform:scaleX(0.9919);">inversenorm_out</span>
<div style="left:129px;top:1387px;width:49.6px;height:49.3px;box-sizing:border-box;border:1.5px solid #cfcfcf;border-radius:9px;background:#e8e8e8;"></div>
<svg style="left:139px;top:1395px;" width="30" height="33" viewBox="0 0 30 33"><defs><linearGradient id="gdb" x1="0" y1="0" x2="1" y2="0"><stop offset="0" stop-color="#b9b9b9"/><stop offset="0.5" stop-color="#dedede"/><stop offset="1" stop-color="#b5b5b5"/></linearGradient></defs><path d="M1,6 Q1,1 15,1 Q29,1 29,6 L29,27 Q29,32 15,32 Q1,32 1,27 Z" fill="url(#gdb)" stroke="#bdbdbd" stroke-width="1"/><path d="M1,13 Q15,18 29,13 M1,20 Q15,25 29,20" fill="none" stroke="#c4c4c4" stroke-width="1.5"/></svg>
<div style="left:1758px;top:1422px;width:7.5px;height:19.5px;background:#919191"></div>
<div style="left:1768px;top:1422px;width:7.5px;height:19.5px;background:#919191"></div>
<div style="left:1778px;top:1422px;width:20px;height:19.5px;background:#919191"></div>
<span class="t" style="left:1833.53px;top:261.77px;font-family:'Liberation Sans', sans-serif;font-size:23.5px;color:#111;transform:scaleX(0.9744);">Code</span>
<svg style="left:2535px;top:247px;" width="26" height="26" viewBox="0 0 26 26"><circle cx="13" cy="12.8" r="11" fill="none" stroke="#8a8a8a" stroke-width="1.6"/><polygon points="7.5,9 18.5,9 13,17" fill="#6e6e6e"/></svg>
<svg style="left:2584px;top:250px;" width="21" height="20" viewBox="0 0 21 20"><path d="M2.5 2.5 L18 17.5 M18 2.5 L2.5 17.5" stroke="#888" stroke-width="2.4"/></svg>
<div style="left:1822px;top:292px;width:792px;height:1150px;background:#ffffff;box-sizing:border-box;border:2px solid #d2d2d2;"></div>
<div style="left:1824px;top:350px;width:788px;height:2px;background:#d6d6d6;"></div>
<svg style="left:1838px;top:308px;" width="26" height="28" viewBox="0 0 26 28"><g ><path d="M13.5 2 L2.5 14 L13.5 26 M2.5 14 L25.5 14" fill="none" stroke="#d8d8d8" stroke-width="3.6"/></g></svg>
<svg style="left:1888px;top:308px;" width="26" height="28" viewBox="0 0 26 28"><g transform="translate(26,0) scale(-1,1)"><path d="M13.5 2 L2.5 14 L13.5 26 M2.5 14 L25.5 14" fill="none" stroke="#d8d8d8" stroke-width="3.6"/></g></svg>
<div style="left:1936px;top:301.2px;width:176px;height:41.5px;background:#fafafa;box-sizing:border-box;border:2px solid #d8d8d8;"></div>
<span class="t" style="left:1947.37px;top:321.47px;font-family:'Liberation Sans', sans-serif;font-size:23.5px;color:#333;transform:scaleX(1.0268);">my_model.c</span>
<svg style="left:2088px;top:316.8px;" width="16" height="12.2" viewBox="0 0 16 12.2"><polygon points="0,0 16,0 8,12.2" fill="#3b6ea3"/></svg>
<svg style="left:2124px;top:306px;" width="38" height="34" viewBox="0 0 38 34"><circle cx="14.5" cy="14.5" r="10" fill="none" stroke="#3a6ea5" stroke-width="4.2"/><path d="M21.5 21.5 L31 30.5" stroke="#3a6ea5" stroke-width="5" stroke-linecap="round"/></svg>
<span class="t" style="left:2164.28px;top:321.57px;font-family:'Liberation Sans', sans-serif;font-size:23.5px;color:#7a7a7a;transform:scaleX(1.0181);">Search</span>
<div style="left:2121px;top:340px;width:442px;height:2px;background:#e2e2e2;"></div>
<div style="left:2578px;top:308.3px;width:28px;height:3.6px;background:#d2d2d2;"></div>
<div style="left:2578px;top:320px;width:28px;height:3.6px;background:#d2d2d2;"></div>
<div style="left:2578px;top:332px;width:28px;height:3.6px;background:#d2d2d2;"></div>
<div style="left:1824px;top:352px;width:89px;height:1033px;background:#fafafa;"></div>
<div style="left:2582px;top:352px;width:2px;height:1044px;background:#dedede;"></div>
<div style="left:2584px;top:454.3px;width:28px;height:84.5px;background:#bdbdbd;"></div>
<div style="left:1824px;top:1385px;width:582px;height:11px;background:#c0c0c0;"></div>
<div style="left:1824px;top:1396px;width:788px;height:2px;background:#e0e0e0;"></div>
<div style="left:1824px;top:1398px;width:788px;height:42px;background:#fafafa;"></div>
<div style="left:1913px;top:352px;width:666px;height:1033px;overflow:hidden;"><span class="t" style="left:1px;top:1.34px;font-family:'Liberation Mono',monospace;font-size:21px;letter-spacing:-0.5px;"><span style="color:#3a7432">/* External outputs (root outports fed by signals with</span></span><span class="t" style="left:1px;top:37.34px;font-family:'Liberation Mono',monospace;font-size:21px;letter-spacing:-0.5px;"><span style="color:#7f501f">ExtY_my_model_T</span><span style="color:#353535"> </span><span style="color:#0f0f88">my_model_Y</span><span style="color:#353535">;</span></span><span class="t" style="left:1px;top:109.34px;font-family:'Liberation Mono',monospace;font-size:21px;letter-spacing:-0.5px;"><span style="color:#3a7432">/* Real-time model */</span></span><span class="t" style="left:1px;top:145.34px;font-family:'Liberation Mono',monospace;font-size:21px;letter-spacing:-0.5px;"><span style="color:#800080">static</span><span style="color:#353535"> </span><span style="color:#7f501f">RT_MODEL_my_model_T</span><span style="color:#353535"> </span><span style="color:#0f0f88">my_model_M_</span><span style="color:#353535">;</span></span><span class="t" style="left:1px;top:181.34px;font-family:'Liberation Mono',monospace;font-size:21px;letter-spacing:-0.5px;"><span style="color:#7f501f">RT_MODEL_my_model_T</span><span style="color:#353535"> </span><span style="color:#900090">*</span><span style="color:#800080">const</span><span style="color:#353535"> </span><span style="color:#0f0f88">my_model_M</span><span style="color:#353535"> = &amp;</span><span style="color:#0f0f88">my_model_M_</span><span style="color:#353535">;</span></span><span class="t" style="left:1px;top:253.34px;font-family:'Liberation Mono',monospace;font-size:21px;letter-spacing:-0.5px;"><span style="color:#3a7432">/*</span></span><span class="t" style="left:1px;top:289.34px;font-family:'Liberation Mono',monospace;font-size:21px;letter-spacing:-0.5px;"><span style="color:#3a7432"> * Output and update for atomic system:</span></span><span class="t" style="left:1px;top:325.34px;font-family:'Liberation Mono',monospace;font-size:21px;letter-spacing:-0.5px;"><span style="color:#3a7432"> *    '</span><span style="color:#2a77b8">&lt;S36&gt;/Sigmoid Layer</span><span style="color:#3a7432">'</span></span><span class="t" style="left:1px;top:361.34px;font-family:'Liberation Mono',monospace;font-size:21px;letter-spacing:-0.5px;"><span style="color:#3a7432"> *    '</span><span style="color:#2a77b8">&lt;S42&gt;/Sigmoid Layer</span><span style="color:#3a7432">'</span></span><span class="t" style="left:1px;top:397.34px;font-family:'Liberation Mono',monospace;font-size:21px;letter-spacing:-0.5px;"><span style="color:#3a7432"> *    '</span><span style="color:#2a77b8">&lt;S48&gt;/Sigmoid Layer</span><span style="color:#3a7432">'</span></span><span class="t" style="left:1px;top:433.34px;font-family:'Liberation Mono',monospace;font-size:21px;letter-spacing:-0.5px;"><span style="color:#3a7432"> */</span></span><span class="t" style="left:1px;top:469.34px;font-family:'Liberation Mono',monospace;font-size:21px;letter-spacing:-0.5px;"><span style="color:#800080">void</span><span style="color:#353535"> </span><span style="color:#0c0cf5">my_model_SigmoidLayer</span><span style="color:#353535">(</span><span style="color:#800080">const</span><span style="color:#353535"> </span><span style="color:#7f501f">real_T</span><span style="color:#353535"> </span><span style="color:#0f0f88">rtu_In1</span><span style="color:#353535">[16], </span><span style="color:#7f501f">real_T</span></span><span class="t" style="left:1px;top:505.34px;font-family:'Liberation Mono',monospace;font-size:21px;letter-spacing:-0.5px;"><span style="color:#1c2456">{</span></span><span class="t" style="left:1px;top:541.34px;font-family:'Liberation Mono',monospace;font-size:21px;letter-spacing:-0.5px;"><span style="color:#353535">  </span><span style="color:#7f501f">int32_T</span><span style="color:#353535"> </span><span style="color:#0f0f88">i</span><span style="color:#353535">;</span></span><span class="t" style="left:1px;top:613.34px;font-family:'Liberation Mono',monospace;font-size:21px;letter-spacing:-0.5px;"><span style="color:#3a7432">  /* Product: '</span><span style="color:#2a77b8">&lt;S41&gt;/DivideOut</span><span style="color:#3a7432">' incorporates:</span></span><span class="t" style="left:1px;top:649.34px;font-family:'Liberation Mono',monospace;font-size:21px;letter-spacing:-0.5px;"><span style="color:#3a7432">   *  Constant: '</span><span style="color:#2a77b8">&lt;S41&gt;/Constant</span><span style="color:#3a7432">'</span></span><span class="t" style="left:1px;top:685.34px;font-family:'Liberation Mono',monospace;font-size:21px;letter-spacing:-0.5px;"><span style="color:#3a7432">   *  Gain: '</span><span style="color:#2a77b8">&lt;S41&gt;/Gain</span><span style="color:#3a7432">'</span></span><span class="t" style="left:1px;top:721.34px;font-family:'Liberation Mono',monospace;font-size:21px;letter-spacing:-0.5px;"><span style="color:#3a7432">   *  Math: '</span><span style="color:#2a77b8">&lt;S41&gt;/Exp</span><span style="color:#3a7432">'</span></span><span class="t" style="left:1px;top:757.34px;font-family:'Liberation Mono',monospace;font-size:21px;letter-spacing:-0.5px;"><span style="color:#3a7432">   *  Sum: '</span><span style="color:#2a77b8">&lt;S41&gt;/Add</span><span style="color:#3a7432">'</span></span><span class="t" style="left:1px;top:793.34px;font-family:'Liberation Mono',monospace;font-size:21px;letter-spacing:-0.5px;"><span style="color:#3a7432">   *</span></span><span class="t" style="left:1px;top:829.34px;font-family:'Liberation Mono',monospace;font-size:21px;letter-spacing:-0.5px;"><span style="color:#3a7432">   * About '</span><span style="color:#2a77b8">&lt;S41&gt;/Exp</span><span style="color:#3a7432">':</span></span><span class="t" style="left:1px;top:865.34px;font-family:'Liberation Mono',monospace;font-size:21px;letter-spacing:-0.5px;"><span style="color:#3a7432">   *  Operator: exp</span></span><span class="t" style="left:1px;top:901.34px;font-family:'Liberation Mono',monospace;font-size:21px;letter-spacing:-0.5px;"><span style="color:#3a7432">   */</span></span><span class="t" style="left:1px;top:937.34px;font-family:'Liberation Mono',monospace;font-size:21px;letter-spacing:-0.5px;"><span style="color:#353535">  </span><span style="color:#800080">for</span><span style="color:#353535"> (</span><span style="color:#0f0f88">i</span><span style="color:#353535"> = 0; </span><span style="color:#0f0f88">i</span><span style="color:#353535"> &lt; 16; </span><span style="color:#0f0f88">i</span><span style="color:#353535">++) {</span></span><span class="t" style="left:1px;top:973.34px;font-family:'Liberation Mono',monospace;font-size:21px;letter-spacing:-0.5px;"><span style="color:#353535">    </span><span style="color:#0f0f88">rty_Out1</span><span style="color:#353535">[</span><span style="color:#0f0f88">i</span><span style="color:#353535">] = 1.0 / (</span><span style="color:#0f0f88">exp</span><span style="color:#353535">(-</span><span style="color:#0f0f88">rtu_In1</span><span style="color:#353535">[</span><span style="color:#0f0f88">i</span><span style="color:#353535">]) + 1.0);</span></span><span class="t" style="left:1px;top:1009.34px;font-family:'Liberation Mono',monospace;font-size:21px;letter-spacing:-0.5px;"><span style="color:#353535">  </span><span style="color:#1c2456">}</span></span><div style="position:absolute;left:0px;top:522px;width:1.5px;height:511px;background:#d9d9d9"></div><div style="position:absolute;left:24.5px;top:952.8px;width:1.5px;height:30px;background:#d9d9d9"></div></div>
<span class="t" style="left:1849.00px;top:387.28px;font-family:'Liberation Sans', sans-serif;font-size:21.5px;color:#b3b3b3;transform:scaleX(0.9600);">36</span>
<span class="t" style="left:1849.00px;top:423.28px;font-family:'Liberation Sans', sans-serif;font-size:21.5px;color:#b3b3b3;transform:scaleX(1.0019);">37</span>
<span class="t" style="left:1849.00px;top:459.28px;font-family:'Liberation Sans', sans-serif;font-size:21.5px;color:#b3b3b3;transform:scaleX(0.9600);">38</span>
<span class="t" style="left:1849.00px;top:495.28px;font-family:'Liberation Sans', sans-serif;font-size:21.5px;color:#b3b3b3;transform:scaleX(1.0019);">39</span>
<span class="t" style="left:1849.00px;top:531.27px;font-family:'Liberation Sans', sans-serif;font-size:21.5px;color:#b3b3b3;transform:scaleX(0.9600);">40</span>
<span class="t" style="left:1849.00px;top:567.27px;font-family:'Liberation Sans', sans-serif;font-size:21.5px;color:#b3b3b3;transform:scaleX(1.0019);">41</span>
<span class="t" style="left:1849.00px;top:603.27px;font-family:'Liberation Sans', sans-serif;font-size:21.5px;color:#b3b3b3;transform:scaleX(1.0019);">42</span>
<span class="t" style="left:1849.00px;top:639.27px;font-family:'Liberation Sans', sans-serif;font-size:21.5px;color:#b3b3b3;transform:scaleX(0.9600);">43</span>
<span class="t" style="left:1849.00px;top:675.27px;font-family:'Liberation Sans', sans-serif;font-size:21.5px;color:#b3b3b3;transform:scaleX(0.9600);">44</span>
<span class="t" style="left:1849.00px;top:711.27px;font-family:'Liberation Sans', sans-serif;font-size:21.5px;color:#b3b3b3;transform:scaleX(0.9600);">45</span>
<span class="t" style="left:1849.00px;top:747.27px;font-family:'Liberation Sans', sans-serif;font-size:21.5px;color:#b3b3b3;transform:scaleX(0.9600);">46</span>
<span class="t" style="left:1849.00px;top:783.27px;font-family:'Liberation Sans', sans-serif;font-size:21.5px;color:#b3b3b3;transform:scaleX(1.0019);">47</span>
<span class="t" style="left:1849.00px;top:819.27px;font-family:'Liberation Sans', sans-serif;font-size:21.5px;color:#b3b3b3;transform:scaleX(0.9600);">48</span>
<span class="t" style="left:1849.00px;top:855.27px;font-family:'Liberation Sans', sans-serif;font-size:21.5px;color:#b3b3b3;transform:scaleX(1.0019);">49</span>
<span class="t" style="left:1849.00px;top:891.27px;font-family:'Liberation Sans', sans-serif;font-size:21.5px;color:#b3b3b3;transform:scaleX(0.9600);">50</span>
<span class="t" style="left:1849.00px;top:927.27px;font-family:'Liberation Sans', sans-serif;font-size:21.5px;color:#b3b3b3;transform:scaleX(1.0019);">51</span>
<span class="t" style="left:1849.00px;top:963.27px;font-family:'Liberation Sans', sans-serif;font-size:21.5px;color:#b3b3b3;transform:scaleX(1.0019);">52</span>
<span class="t" style="left:1849.00px;top:999.27px;font-family:'Liberation Sans', sans-serif;font-size:21.5px;color:#b3b3b3;transform:scaleX(0.9600);">53</span>
<span class="t" style="left:1849.00px;top:1035.27px;font-family:'Liberation Sans', sans-serif;font-size:21.5px;color:#b3b3b3;transform:scaleX(0.9600);">54</span>
<span class="t" style="left:1849.00px;top:1071.27px;font-family:'Liberation Sans', sans-serif;font-size:21.5px;color:#b3b3b3;transform:scaleX(0.9600);">55</span>
<span class="t" style="left:1849.00px;top:1107.27px;font-family:'Liberation Sans', sans-serif;font-size:21.5px;color:#b3b3b3;transform:scaleX(0.9600);">56</span>
<span class="t" style="left:1849.00px;top:1143.27px;font-family:'Liberation Sans', sans-serif;font-size:21.5px;color:#b3b3b3;transform:scaleX(1.0019);">57</span>
<span class="t" style="left:1849.00px;top:1179.27px;font-family:'Liberation Sans', sans-serif;font-size:21.5px;color:#b3b3b3;transform:scaleX(0.9600);">58</span>
<span class="t" style="left:1849.00px;top:1215.27px;font-family:'Liberation Sans', sans-serif;font-size:21.5px;color:#b3b3b3;transform:scaleX(1.0019);">59</span>
<span class="t" style="left:1848.00px;top:1251.27px;font-family:'Liberation Sans', sans-serif;font-size:21.5px;color:#b3b3b3;transform:scaleX(1.0019);">60</span>
<span class="t" style="left:1847.95px;top:1287.27px;font-family:'Liberation Sans', sans-serif;font-size:21.5px;color:#2b7bd2;transform:scaleX(1.0475);">61</span>
<span class="t" style="left:1847.95px;top:1323.27px;font-family:'Liberation Sans', sans-serif;font-size:21.5px;color:#2b7bd2;transform:scaleX(1.0475);">62</span>
<span class="t" style="left:1848.00px;top:1359.27px;font-family:'Liberation Sans', sans-serif;font-size:21.5px;color:#b3b3b3;transform:scaleX(1.0019);">63</span>
<div style="left:1824px;top:352px;width:89px;height:30px;overflow:hidden;"><span class="t" style="left:25px;top:-0.72px;font-size:21.5px;color:#b3b3b3;font-family:'Liberation Sans';transform:scaleX(0.96)">35</span></div>
<svg style="left:1884px;top:846.8px;" width="18" height="18" viewBox="0 0 18 18"><rect x="0.8" y="0.8" width="16.4" height="16.4" fill="#fff" stroke="#bcbcbc" stroke-width="1.6"/><rect x="4" y="8" width="10" height="2" fill="#7a7a7a"/></svg>
<svg style="left:1884px;top:1278.8px;" width="18" height="18" viewBox="0 0 18 18"><rect x="0.8" y="0.8" width="16.4" height="16.4" fill="#fff" stroke="#bcbcbc" stroke-width="1.6"/><rect x="4" y="8" width="10" height="2" fill="#7a7a7a"/></svg>
<span class="t" style="left:1843px;top:1419.54px;font-family:'Liberation Mono',monospace;font-size:21px;letter-spacing:-0.5px;color:#2c72b4;">…ed-ex90792814\my_model_ert_rtw\my_model.c</span>
<span class="t" style="left:2395.53px;top:1416.78px;font-family:'Liberation Sans', sans-serif;font-size:23.5px;color:#777;transform:scaleX(0.9680);">Ln</span>
<span class="t" style="left:2442.80px;top:1416.78px;font-family:'Liberation Sans', sans-serif;font-size:23.5px;color:#333;transform:scaleX(0.9206);">53</span>
<span class="t" style="left:2509.33px;top:1416.78px;font-family:'Liberation Sans', sans-serif;font-size:23.5px;color:#777;transform:scaleX(0.9655);">Col</span>
<span class="t" style="left:2565.00px;top:1416.78px;font-family:'Liberation Sans', sans-serif;font-size:23.5px;color:#333;transform:scaleX(0.9206);">30</span>
<div style="left:2622px;top:236px;width:2px;height:1212px;background:#b4b4b4;"></div>
<div style="left:2638px;top:240px;width:45px;height:239.7px;background:#ffffff;box-sizing:border-box;border:2px solid #d6d6d6;border-right:none;"></div>
<span class="t" style="left:2662.22px;top:263.49px;font-family:'Liberation Sans', sans-serif;font-size:23.5px;color:#111;transform:rotate(90deg) scaleX(1.0085);">Property Inspector</span>
</body></html>
